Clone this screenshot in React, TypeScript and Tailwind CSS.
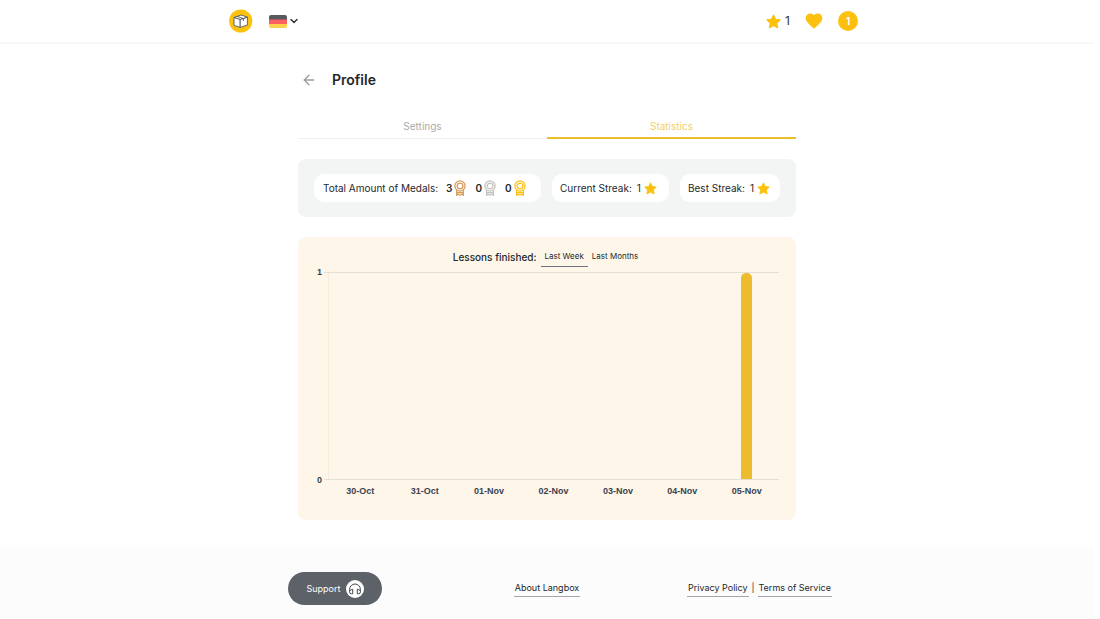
import { useState } from "react";
import { ArrowLeft, ChevronDown } from "lucide-react";
import { MdFavorite } from "react-icons/md";

const LogoIcon = () => (
  <svg viewBox="0 0 24 24" className="size-6" aria-hidden="true">
    <circle cx="11.7" cy="12" r="11.6" fill="#fcc10e" />
    <g fill="#fff" stroke="#54585c" strokeWidth="0.9" strokeLinejoin="round">
      <path d="M5 8.4 11.2 10.4V18.4L5 16.4Z" />
      <path d="M11.2 10.4 18.4 8.2V16L11.2 18.4Z" />
      <path d="M5 8.4 12.2 6 18.4 8.2 11.2 10.4Z" />
      <path d="M8 7.4 14.4 9.5V12" fill="none" />
    </g>
  </svg>
);

const FlagIcon = () => (
  <svg viewBox="0 0 18 13" className="h-[13px] w-[18px] rounded-xs" aria-hidden="true">
    <rect width="18" height="5" fill="#56595e" />
    <rect y="4.5" width="18" height="5" fill="#fb5f62" />
    <rect y="9" width="18" height="4" fill="#fdcf4b" />
  </svg>
);

const StarIcon = ({ className }: { className: string }) => (
  <svg viewBox="0 0 14 14" className={className} aria-hidden="true">
    <path
      d="M7 .9 8.9 4.9 13.2 5.5 10.1 8.5 10.9 12.9 7 10.8 3.1 12.9 3.9 8.5 .8 5.5 5.1 4.9Z"
      fill="#fcc10e"
      stroke="#fcc10e"
      strokeWidth="1"
      strokeLinejoin="round"
    />
  </svg>
);

const MedalIcon = ({ color }: { color: string }) => (
  <svg
    viewBox="0 0 12 16"
    className="h-4 w-3"
    fill="none"
    stroke={color}
    strokeWidth="1.3"
    strokeLinejoin="round"
    aria-hidden="true"
  >
    <circle cx="6" cy="6" r="5.1" />
    <circle cx="6" cy="6" r="2.9" />
    <path d="M2.6 10.2V15.3L4.3 14.2 6 15.2 7.7 14.2 9.4 15.3V10.2M2.8 12.6H9.2" />
  </svg>
);

const HeadphonesIcon = () => (
  <svg viewBox="0 0 18 18" className="size-[18px]" aria-hidden="true">
    <circle cx="9" cy="9" r="9" fill="#fff" />
    <g fill="none" stroke="#44494e" strokeWidth="1" strokeLinecap="round" strokeLinejoin="round">
      <path d="M3.6 11V9.4a5.4 5.4 0 0 1 10.8 0V11" />
      <path d="M6.7 9.6v4.2H5.4a1.8 1.8 0 0 1-1.8-1.8v-.6a1.8 1.8 0 0 1 1.8-1.8Z" />
      <path d="M11.3 9.6v4.2h1.3a1.8 1.8 0 0 0 1.8-1.8v-.6a1.8 1.8 0 0 0-1.8-1.8Z" />
    </g>
  </svg>
);

const medals = [
  { name: "Bronze", count: 3, color: "#d59b58" },
  { name: "Silver", count: 0, color: "#c4c2bd" },
  { name: "Gold", count: 0, color: "#fcc10e" },
];

const streaks = [
  { label: "Current Streak:", value: 1 },
  { label: "Best Streak:", value: 1 },
];

const lessons = [
  { day: "30-Oct", finished: 0 },
  { day: "31-Oct", finished: 0 },
  { day: "01-Nov", finished: 0 },
  { day: "02-Nov", finished: 0 },
  { day: "03-Nov", finished: 0 },
  { day: "04-Nov", finished: 0 },
  { day: "05-Nov", finished: 1 },
];

const ranges = ["Last Week", "Last Months"];

const Header = () => (
  <header className="border-b-2 border-[#f8f8f8]">
    <div className="mx-auto flex h-[42px] max-w-[636px] items-center justify-between pr-[7px]">
      <div className="flex items-center gap-4">
        <a href="#home" aria-label="Langbox">
          <LogoIcon />
        </a>
        <button type="button" aria-label="Language: German" className="flex items-center gap-px">
          <FlagIcon />
          <ChevronDown className="size-3 text-[#33373b]" strokeWidth={3} />
        </button>
      </div>
      <div className="flex items-center">
        <StarIcon className="size-[15px]" />
        <span className="ml-1 text-xs text-[#33373b]">1</span>
        <MdFavorite className="ml-[14px] size-5 text-[#fcc10e]" />
        <span className="ml-[14px] flex size-5 items-center justify-center rounded-full bg-[#fcc10e] text-[10px] font-semibold text-white">
          1
        </span>
      </div>
    </div>
  </header>
);

const Tabs = () => (
  <div role="tablist" className="mt-[22px] flex h-[25px] text-[10px] leading-[15px]">
    <button role="tab" aria-selected="false" className="flex flex-1 justify-center border-b border-[#f0f0f0] pt-[5px] text-[#a9adab]">
      Settings
    </button>
    <button role="tab" aria-selected="true" className="flex flex-1 justify-center border-b-2 border-[#ecbc2f] pt-[5px] text-[#f3cf68]">
      Statistics
    </button>
  </div>
);

const StatsBar = () => (
  <section className="mt-5 grid grid-cols-[227fr_117fr_100fr] gap-[11px] rounded-lg bg-[#f3f5f5] px-4 py-[15px] text-[10px]">
    <div className="flex h-7 items-center rounded-[10px] bg-white pl-[9px] whitespace-nowrap">
      <span>Total Amount of Medals:</span>
      <div className="ml-2 flex gap-[9px]">
        {medals.map((medal) => (
          <span key={medal.name} title={medal.name} className="flex items-center gap-0.5 font-semibold">
            {medal.count}
            <MedalIcon color={medal.color} />
          </span>
        ))}
      </div>
    </div>
    {streaks.map((streak) => (
      <div key={streak.label} className="flex h-7 items-center rounded-[10px] bg-white pl-2 whitespace-nowrap">
        <span>{streak.label}</span>
        <span className="ml-[5px]">{streak.value}</span>
        <StarIcon className="ml-[3px] size-[13px]" />
      </div>
    ))}
  </section>
);

const LessonsChart = () => {
  const [range, setRange] = useState(ranges[0]);
  const max = Math.max(...lessons.map((lesson) => lesson.finished));

  return (
    <section className="mt-5 rounded-lg bg-[#fef7e9] pt-[10px] pr-[17px] pb-6 pl-[18px]">
      <div className="flex items-start justify-center">
        <h2 className="mr-1 text-[10px] leading-5 font-medium">Lessons finished:</h2>
        {ranges.map((item) => (
          <button
            key={item}
            type="button"
            onClick={() => setRange(item)}
            className={`h-5 border-b px-1 text-[8px] leading-[19px] ${
              item === range ? "border-[#6d7480]" : "border-transparent"
            }`}
          >
            {item}
          </button>
        ))}
      </div>

      <div className="mt-[5px] flex font-['Liberation_Sans',sans-serif] text-[9px] leading-[10px] font-bold text-[#3b4252]">
        <div className="-my-[5px] flex h-[218px] w-[6px] flex-col justify-between text-right">
          <span>{max}</span>
          <span>0</span>
        </div>
        <div className="ml-[2px] flex-1">
          <div className="border-y border-[#e3e0d3] pl-1">
            <div className="flex h-[206px] border-l border-[#f2ecdd]">
              {lessons.map((lesson) => (
                <div key={lesson.day} className="flex flex-1 items-end justify-center">
                  <div
                    className="w-[11px] rounded-t-[5px] bg-[#edbb2e]"
                    style={{ height: `${(lesson.finished / max) * 100}%` }}
                  />
                </div>
              ))}
            </div>
          </div>
          <div className="mt-[6px] flex pl-1">
            {lessons.map((lesson) => (
              <span key={lesson.day} className="flex-1 text-center">
                {lesson.day}
              </span>
            ))}
          </div>
        </div>
      </div>
    </section>
  );
};

const Footer = () => (
  <footer className="mt-[27px] bg-[#fcfcfc] pt-[25px] pb-[14px] text-[9px]">
    <div className="mx-auto grid max-w-[570px] grid-cols-3 items-center">
      <button
        type="button"
        className="ml-[26px] flex h-[33px] w-[94px] items-center justify-center gap-[5px] justify-self-start rounded-full bg-[#5c6268] text-white"
      >
        Support
        <HeadphonesIcon />
      </button>
      <a href="#about" className="justify-self-center border-b border-[#a5a5a9] px-px leading-4 whitespace-nowrap">
        About Langbox
      </a>
      <div className="flex gap-[3px] justify-self-end leading-4 whitespace-nowrap">
        <a href="#privacy" className="border-b border-[#a5a5a9] px-px">
          Privacy Policy
        </a>
        <span>|</span>
        <a href="#terms" className="border-b border-[#a5a5a9] px-px">
          Terms of Service
        </a>
      </div>
    </div>
  </footer>
);

const App = () => (
  <div className="bg-white font-[Inter,'Open_Sans',sans-serif] text-[#24282c]">
    <div className="mr-[6px]">
      <Header />
      <main className="mx-auto max-w-[498px] pt-6">
        <div className="flex items-center pl-[3px]">
          <a href="#back" aria-label="Back" className="text-[#9b9f9f]">
            <ArrowLeft className="size-4" strokeWidth={2} />
          </a>
          <h1 className="ml-[15px] text-[14px] leading-6 font-semibold">Profile</h1>
        </div>
        <Tabs />
        <StatsBar />
        <LessonsChart />
      </main>
      <Footer />
    </div>
  </div>
);

export default App;
